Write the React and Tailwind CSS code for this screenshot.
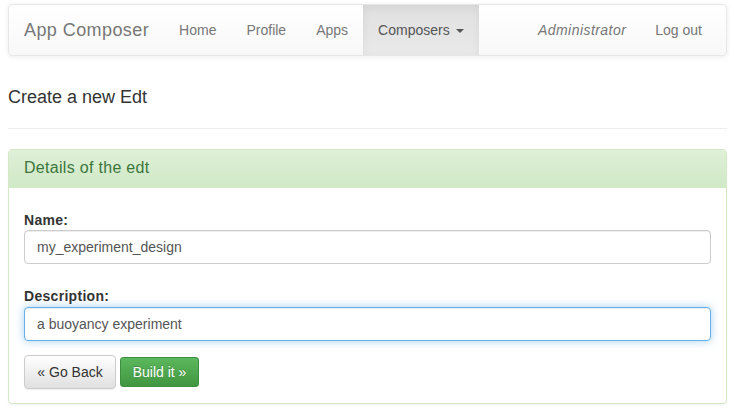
import React from "react";

export default function App() {
  return (
    <div
      className="min-h-[418px] bg-white pl-2 pr-3 pt-1 text-[14px] text-[#333]"
      style={{ fontFamily: '"Liberation Sans", Arial, sans-serif' }}
    >
      {/* Navbar */}
      <nav className="flex h-[52px] items-stretch rounded-[4px] border border-[#e7e7e7] bg-gradient-to-b from-white to-[#f8f8f8] shadow-[0_1px_5px_rgba(0,0,0,0.075)]">
        <a className="px-[15px] py-[15px] text-[18px] leading-[20px] tracking-[0.42px] text-[#777]">App Composer</a>
        <div className="flex items-stretch">
          <a className="px-[15px] py-[15px] leading-[20px] text-[#777]">Home</a>
          <a className="px-[15px] py-[15px] leading-[20px] text-[#777]">Profile</a>
          <a className="px-[15px] py-[15px] leading-[20px] text-[#777]">Apps</a>
          <a className="flex items-center bg-gradient-to-b from-[#e0e0e0] to-[#e9e9e9] px-[15px] leading-[20px] text-[#555] shadow-[inset_0_3px_9px_rgba(0,0,0,0.06)]">
            Composers
            <span className="ml-[6px] mt-[1px] inline-block h-0 w-0 border-x-[4px] border-t-[4px] border-x-transparent border-t-[#555]" />
          </a>
        </div>
        <div className="ml-auto flex items-stretch pr-[9px]">
          <span className="mr-[14px] py-[15px] italic leading-[20px] tracking-[0.45px] text-[#777]">Administrator</span>
          <a className="px-[15px] py-[15px] leading-[20px] text-[#777]">Log out</a>
        </div>
      </nav>

      {/* Heading */}
      <h3 className="mt-[31px] text-[18px] font-normal leading-[20px] text-[#333]">Create a new Edt</h3>
      <hr className="mt-[21px] border-0 border-t border-[#eee]" />

      {/* Panel */}
      <div className="mt-[20px] rounded-[4px] border border-[#d6e9c6] bg-white shadow-[0_1px_2px_rgba(0,0,0,0.05)]">
        <div className="rounded-t-[3px] border-b border-[#d6e9c6] bg-gradient-to-b from-[#dff0d8] to-[#d0e9c6] px-[15px] pb-[10px] pt-[9px] text-[16px] leading-[18px] tracking-[0.3px] text-[#3c763d]">
          Details of the edt
        </div>
        <div className="px-[15px] pb-[14px] pt-[22px]">
          <label className="block text-[14px] font-bold leading-[20px] tracking-[0.3px] text-[#333]">Name:</label>
          <div className="flex h-[34px] items-center rounded-[4px] border border-[#ccc] bg-white px-[12px] text-[14px] text-[#555] shadow-[inset_0_1px_1px_rgba(0,0,0,0.075)]">
            my_experiment_design
          </div>

          <label className="mt-[22px] block text-[14px] font-bold leading-[20px] tracking-[0.3px] text-[#333]">Description:</label>
          <div className="mt-[1px] flex h-[34px] items-center rounded-[4px] border border-[#66afe9] bg-white px-[12px] text-[14px] text-[#555] shadow-[inset_0_1px_1px_rgba(0,0,0,0.075),0_0_8px_rgba(102,175,233,0.6)]">
            a buoyancy experiment
          </div>

          <div className="mt-[14px] flex items-center gap-[4px]">
            <button className="h-[34px] w-[92px] rounded-[4px] border border-[#ccc] bg-gradient-to-b from-white to-[#e0e0e0] text-[14px] text-[#333] shadow-[inset_0_1px_0_rgba(255,255,255,0.15),0_1px_1px_rgba(0,0,0,0.075)]">
              « Go Back
            </button>
            <button className="h-[30px] w-[79px] rounded-[3px] border border-[#3e8f3e] bg-gradient-to-b from-[#5cb85c] to-[#419641] text-[14px] text-white [text-shadow:0_-1px_0_rgba(0,0,0,0.2)]">
              Build it »
            </button>
          </div>
        </div>
      </div>
    </div>
  );
}
